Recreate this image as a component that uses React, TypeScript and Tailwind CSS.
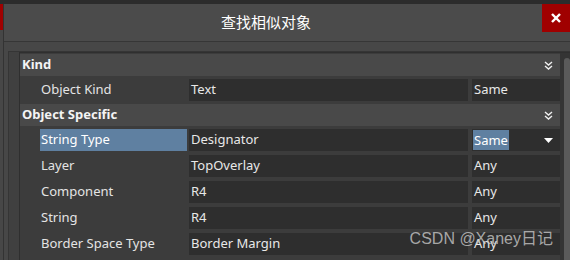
import React from 'react';

// ── Data ─────────────────────────────────────────────────────

type Row = { label: string; value: string; match: string; active?: boolean };

const KIND_ROWS: Row[] = [{ label: 'Object Kind', value: 'Text', match: 'Same' }];

const SPECIFIC_ROWS: Row[] = [
  { label: 'String Type', value: 'Designator', match: 'Same', active: true },
  { label: 'Layer', value: 'TopOverlay', match: 'Any' },
  { label: 'Component', value: 'R4', match: 'Any' },
  { label: 'String', value: 'R4', match: 'Any' },
  { label: 'Border Space Type', value: 'Border Margin', match: 'Any' },
];

const UI_FONT = "font-['Noto_Sans','Open_Sans',sans-serif]";

// ── Icons ────────────────────────────────────────────────────

function DoubleChevron() {
  return (
    <svg width="9" height="9" viewBox="0 0 9 9" fill="none" stroke="#f0f0f0" strokeWidth="1.4">
      <polyline points="1,1 4.5,4 8,1" />
      <polyline points="1,5 4.5,8 8,5" />
    </svg>
  );
}

function CloseIcon() {
  return (
    <svg width="10" height="10" viewBox="0 0 10 10" stroke="#ffffff" strokeWidth="2.4">
      <line x1="1" y1="1" x2="9" y2="9" />
      <line x1="9" y1="1" x2="1" y2="9" />
    </svg>
  );
}

// ── Rows ─────────────────────────────────────────────────────

function Header({ title }: { title: string }) {
  return (
    <div className="my-[1px] flex h-[22px] items-center justify-between bg-[#494949] pl-[2px] pr-[7px]">
      <span className="text-[13px] font-bold text-[#f4f4f4]">{title}</span>
      <DoubleChevron />
    </div>
  );
}

function PropRow({ row }: { row: Row }) {
  return (
    <div className="flex h-[26px] items-center py-[2px] text-[13px]">
      <div className="w-[20px] shrink-0" />
      <div
        className={
          row.active
            ? 'flex h-full w-[147px] shrink-0 items-center bg-[#5f80a1] pl-[1px] text-white'
            : 'flex h-full w-[147px] shrink-0 items-center pl-[1px] text-[#e4e4e4]'
        }
      >
        {row.label}
      </div>
      <div className="ml-[2px] flex h-full w-[279px] shrink-0 items-center bg-[#2e2e2e] pl-[2px] text-[#e8e8e8]">
        {row.value}
      </div>
      <div className="ml-[4px] flex h-full flex-1 items-center justify-between bg-[#2e2e2e] pl-[1px] pr-[7px] text-[#e8e8e8]">
        {row.active ? (
          <>
            <span className="bg-[#5f80a1] px-[1px] leading-[20px] text-white">{row.match}</span>
            <svg width="9" height="5" viewBox="0 0 9 5" fill="#ffffff">
              <polygon points="0,0 9,0 4.5,5" />
            </svg>
          </>
        ) : (
          <span className="px-[1px]">{row.match}</span>
        )}
      </div>
    </div>
  );
}

// ── App ──────────────────────────────────────────────────────

export default function App() {
  return (
    <div className={`relative flex h-[260px] w-[570px] flex-col overflow-hidden bg-[#2c2c2c] ${UI_FONT}`}>
      <div className="h-[4px] shrink-0 bg-[#2c2c2c]" />
      <div className="flex min-h-0 flex-1">
        {/* window behind, left edge */}
        <div className="flex w-[3px] shrink-0 flex-col">
          <div className="h-[26px] bg-[#a00000]" />
          <div className="flex-1 bg-[#474747]" />
        </div>
        <div className="w-[1px] shrink-0 bg-[#333333]" />

        {/* dialog */}
        <div className="flex min-w-0 flex-1 flex-col">
          <div className="flex h-[37px] shrink-0 bg-[#4b4b4b]">
            <div className="flex flex-1 items-center justify-center pr-[14px] font-['Noto_Sans_CJK_SC',sans-serif] text-[15px] text-white">
              查找相似对象
            </div>
            <div className="flex h-[28px] w-[28px] items-center justify-center bg-[#a00000]">
              <CloseIcon />
            </div>
          </div>
          <div className="h-[1px] shrink-0 bg-[#363636]" />

          <div className="flex min-h-0 flex-1 flex-col bg-[#474747] pt-[9px]">
            <div className="ml-[4px] flex min-h-0 flex-1 border-l border-t border-[#353535] bg-[#404040] pl-[10px]">
              <div className="flex min-w-0 flex-1 border-l border-t border-[#2f2f2f] bg-[#3c3c3c]">
                <div className="w-[540px] shrink-0">
                  <Header title="Kind" />
                  {KIND_ROWS.map((r) => (
                    <PropRow key={r.label} row={r} />
                  ))}
                  <Header title="Object Specific" />
                  {SPECIFIC_ROWS.map((r) => (
                    <PropRow key={r.label} row={r} />
                  ))}
                </div>
                <div className="flex flex-1 bg-[#343434] pl-[4px] pt-[5px]">
                  <div className="flex-1 rounded-t-[3px] bg-[#5a5a5a]" />
                </div>
              </div>
            </div>
          </div>
        </div>
      </div>

      {/* watermark */}
      <div className="pointer-events-none absolute bottom-[9px] right-[17px] font-['Liberation_Sans','Noto_Sans_CJK_SC',sans-serif] text-[16px] text-[#c8c8c8]/80">
        CSDN @Xaney日记
      </div>
    </div>
  );
}
